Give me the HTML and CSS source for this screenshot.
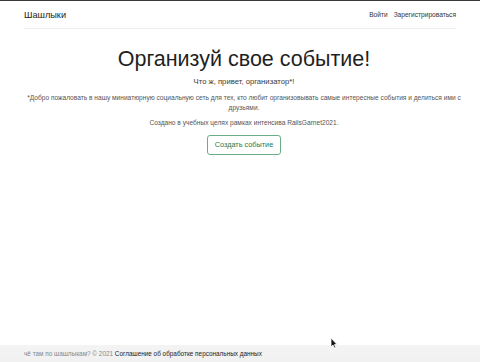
FILE: index.html
```html
<!DOCTYPE html>
<html lang="ru">
<head>
    <meta charset="UTF-8">
    <meta name="viewport" content="width=device-width, initial-scale=1.0">
    <title>Шашлыки</title>
    <link rel="stylesheet" href="styles.css">
</head>
<body>
    <div class="page">
        <header class="navbar">
            <div class="container nav-inner">
                <a class="brand" href="#">Шашлыки</a>
                <nav class="nav-links">
                    <a href="#">Войти</a>
                    <a href="#">Зарегистрироваться</a>
                </nav>
            </div>
        </header>

        <main class="container hero">
            <h1>Организуй свое событие!</h1>
            <p class="lead">Что ж, привет, организатор*!</p>
            <p>*Добро пожаловать в нашу миниатюрную социальную сеть для тех, кто любит организовывать самые интересные события и делиться ими с друзьями.</p>
            <p>Создано в учебных целях рамках интенсива RailsGarnet2021.</p>
            <a class="btn" href="#">Создать событие</a>
        </main>

        <footer class="footer">
            <div class="container">
                <span class="muted">чё там по шашлыкам? © 2021</span>
                <a href="#">Соглашение об обработке персональных данных</a>
            </div>
        </footer>
    </div>
    <svg class="cursor" width="8" height="12" viewBox="0 0 8 12">
        <path d="M1 1 L1 10 L3 8 L4.5 11 L5.8 10.4 L4.4 7.6 L7 7.6 Z" fill="#111" stroke="#fff" stroke-width="0.8"/>
    </svg>
</body>
</html>
```

FILE: styles.css
```css
html, body {
    height: 100%;
}
body {
    margin: 0;
    font-family: "Liberation Sans", Arial, sans-serif;
    color: #212529;
    background-color: #fff;
    border-top: 1px solid #3a3a3a;
    box-sizing: border-box;
}
a {
    text-decoration: none;
}
.page {
    min-height: 100%;
    display: flex;
    flex-direction: column;
}
.container {
    width: 432px;
    margin: 0 auto;
}
.nav-inner {
    display: flex;
    align-items: center;
    justify-content: space-between;
    height: 27px;
    border-bottom: 1px solid #ececec;
}
.brand {
    font-size: 9.2px;
    color: #222;
}
.nav-links {
    display: flex;
    gap: 6px;
}
.nav-links a {
    font-size: 6.6px;
    color: #333;
}
.hero {
    text-align: center;
    flex: 1;
    padding-top: 17px;
    padding-left: 8px;
    width: 444px;
}
.hero h1 {
    font-size: 21.5px;
    font-weight: 400;
    margin: 0 0 4px;
    line-height: 26px;
    color: #1f1f1f;
}
.hero p {
    font-size: 6.6px;
    line-height: 10px;
    color: #555;
    margin: 0 0 5px;
}
.hero p.lead {
    font-size: 7.7px;
    line-height: 12px;
    color: #3a3a3a;
    margin-bottom: 5px;
}
.btn {
    display: inline-block;
    margin-top: 2px;
    padding: 4px 7px 5px;
    font-size: 7.3px;
    line-height: 9px;
    color: #1e7a4a;
    border: 1px solid #6aae88;
    border-radius: 3px;
}
.footer {
    height: 17px;
    display: flex;
    align-items: center;
    background: linear-gradient(#f4f4f4, #f1f1f1);
}
.footer .container {
    font-size: 6.4px;
}
.footer .muted {
    color: #888;
}
.footer a {
    color: #222;
}
.cursor {
    position: absolute;
    left: 330px;
    top: 337px;
}
```
